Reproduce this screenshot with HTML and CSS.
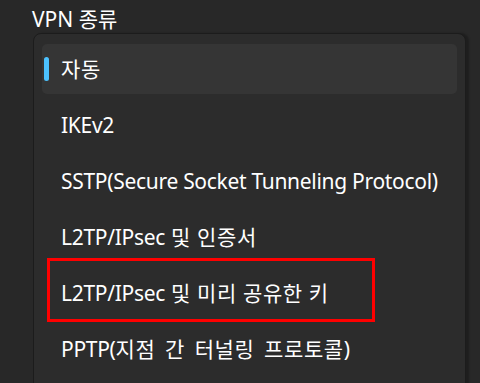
FILE: index.html
```html
<!DOCTYPE html>
<html lang="ko">
<head>
<meta charset="utf-8">
<link rel="stylesheet" href="styles.css">
</head>
<body>
<div class="page">
  <div class="title">VPN 종류</div>
  <div class="menu">
    <div class="item selected"><span class="indicator"></span><span class="ko">자동</span></div>
    <div class="item">IKEv2</div>
    <div class="item">SSTP(Secure Socket Tunneling Protocol)</div>
    <div class="item">L2TP/IPsec<span class="ko">&nbsp;및 인증서</span></div>
    <div class="item">L2TP/IPsec<span class="ko">&nbsp;및 미리 공유한 키</span></div>
    <div class="item">PPTP(<span class="ko wide">지점 간 터널링 프로토콜)</span></div>
  </div>
  <div class="highlight"></div>
</div>
</body>
</html>
```
FILE: styles.css
```css
html, body {
  margin: 0;
  padding: 0;
  background: #282828;
}
body {
  width: 480px;
  height: 383px;
  overflow: hidden;
  font-family: "Noto Sans", "Noto Sans CJK KR", sans-serif;
  color: #ffffff;
}
.page {
  position: relative;
  padding-left: 32px;
}
.title {
  font-size: 21px;
  line-height: 28px;
  padding-top: 5px;
  height: 28px;
}
.menu {
  margin-left: 1px;
  width: 415px;
  height: 336px;
  background: #2c2c2c;
  border: 1px solid #1c1c1c;
  border-radius: 8px;
  padding: 10px 8px;
  display: flex;
  flex-direction: column;
  gap: 6px;
  box-shadow: 3px 0 2px rgba(0, 0, 0, 0.25);
}
.item {
  position: relative;
  height: 50px;
  display: flex;
  align-items: center;
  padding-left: 19px;
  font-size: 21px;
  line-height: 28px;
  letter-spacing: -0.3px;
  border-radius: 5px;
  white-space: nowrap;
}
.ko {
  letter-spacing: 0.6px;
  white-space: pre;
}
.ko.wide {
  word-spacing: 3.6px;
}
.item.selected {
  background: #353535;
}
.indicator {
  position: absolute;
  left: 2px;
  top: 13px;
  width: 5px;
  height: 24px;
  border-radius: 3px;
  background: #4cc2ff;
}
.highlight {
  position: absolute;
  left: 47px;
  top: 258px;
  width: 322px;
  height: 58px;
  border: 3px solid #ff0000;
}
```
